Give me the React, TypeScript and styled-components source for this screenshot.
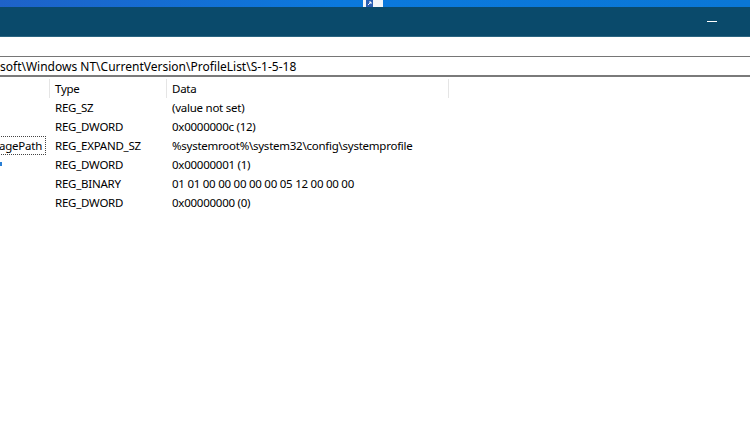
import styled, { createGlobalStyle } from "styled-components";

const Global = createGlobalStyle`
  html, body {
    margin: 0;
    padding: 0;
    background: #ffffff;
  }
  body {
    font-family: "Noto Sans", "Liberation Sans", sans-serif;
    font-size: 11.5px;
    letter-spacing: -0.25px;
    color: #000000;
    overflow: hidden;
  }
`;

const Window = styled.div`
  width: 750px;
  height: 422px;
  display: flex;
  flex-direction: column;
  background: #ffffff;
  overflow: hidden;
`;

const DesktopStrip = styled.div`
  height: 7px;
  flex: none;
  display: flex;
  padding-left: 363px;
  background: linear-gradient(90deg, #1e62c8 0%, #0b79dd 45%, #0a77d6 100%);
`;

const PeekIcon = styled.div`
  width: 20px;
  height: 7px;
  background: #f4f6f9;
  display: flex;
  align-items: flex-end;
  padding-left: 3px;
  box-sizing: border-box;
`;

const TitleBar = styled.div`
  height: 29px;
  flex: none;
  display: flex;
  justify-content: flex-end;
  padding-right: 15px;
  background: #0a4a6b;
  border-bottom: 1px solid #2b6581;
`;

const CaptionButton = styled.div`
  width: 46px;
  display: flex;
  align-items: center;
  justify-content: center;
`;

const MinGlyph = styled.span`
  width: 10px;
  height: 1px;
  background: #ffffff;
`;

const MenuBar = styled.div`
  height: 19px;
  flex: none;
`;

const AddressBar = styled.div`
  height: 17px;
  flex: none;
  display: flex;
  align-items: center;
  padding-top: 1px;
  font-size: 12px;
  letter-spacing: 0;
  border-top: 1px solid #767676;
  border-bottom: 2px solid #7a7a7a;
  white-space: nowrap;
  overflow: hidden;
`;

const Grid = styled.div`
  display: grid;
  grid-template-columns: 50px 117px 282px 1fr;
`;

const HeaderCell = styled.div<{ $divider?: boolean }>`
  height: 19px;
  display: flex;
  align-items: center;
  padding-left: 5px;
  margin: 2px 0 0;
  border-right: ${(p) => (p.$divider ? "1px solid #e5e5e5" : "none")};
`;

const Cell = styled.div`
  height: 19px;
  display: flex;
  align-items: center;
  padding-left: 5px;
  white-space: nowrap;
  overflow: hidden;
`;

const NameCell = styled.div`
  height: 19px;
  display: flex;
  align-items: center;
  justify-content: flex-end;
  padding-right: 4px;
  white-space: nowrap;
`;

const FocusBox = styled.span`
  height: 17px;
  display: flex;
  align-items: center;
  padding: 0 3px 0 0;
  border: 1px dotted #444444;
  border-left: none;
`;

const Tick = styled.span`
  width: 2px;
  height: 4px;
  margin-right: auto;
  margin-top: -2px;
  border-left: 2px dotted #2a7fd4;
`;

const rows = [
  { type: "REG_SZ", data: "(value not set)" },
  { type: "REG_DWORD", data: "0x0000000c (12)" },
  { type: "REG_EXPAND_SZ", data: "%systemroot%\\system32\\config\\systemprofile", focus: "agePath" },
  { type: "REG_DWORD", data: "0x00000001 (1)", tick: true },
  { type: "REG_BINARY", data: "01 01 00 00 00 00 00 05 12 00 00 00" },
  { type: "REG_DWORD", data: "0x00000000 (0)" },
];

export default function App() {
  return (
    <Window>
      <Global />
      <DesktopStrip>
        <PeekIcon>
          <svg width="8" height="7" viewBox="0 0 8 7">
            <rect x="0" y="0" width="7" height="7" fill="#2b5fb3" />
            <path d="M2 5 L5 2 M3 2 H5 V4" stroke="#ffffff" strokeWidth="1" fill="none" />
          </svg>
        </PeekIcon>
      </DesktopStrip>
      <TitleBar>
        <CaptionButton>
          <MinGlyph />
        </CaptionButton>
      </TitleBar>
      <MenuBar />
      <AddressBar>soft\Windows NT\CurrentVersion\ProfileList\S-1-5-18</AddressBar>
      <Grid>
        <HeaderCell $divider />
        <HeaderCell $divider>Type</HeaderCell>
        <HeaderCell $divider>Data</HeaderCell>
        <HeaderCell />
        {rows.map((r) => (
          <>
            <NameCell>
              {r.focus && <FocusBox>{r.focus}</FocusBox>}
              {r.tick && <Tick />}
            </NameCell>
            <Cell>{r.type}</Cell>
            <Cell>{r.data}</Cell>
            <Cell />
          </>
        ))}
      </Grid>
    </Window>
  );
}
